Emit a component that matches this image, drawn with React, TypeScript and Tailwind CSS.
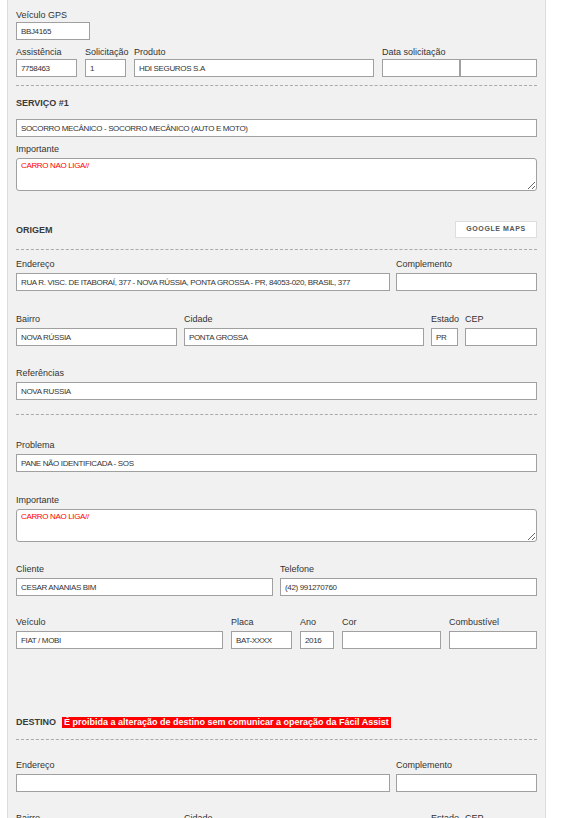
import type { ReactNode } from 'react'

const inputCls =
  'block h-[18px] w-full border border-[#a0a0a0] bg-white px-[4px] text-[8px] tracking-[-0.35px] text-[#333] outline-none'

function Label({ children, low }: { children: ReactNode; low?: boolean }) {
  return (
    <div
      className={`h-[14px] whitespace-nowrap text-[9px] text-[#333] ${low ? 'leading-[14px]' : 'leading-[11px]'}`}
    >
      {children}
    </div>
  )
}

function Field({ label, value = '', w, low }: { label: string; value?: string; w: string; low?: boolean }) {
  return (
    <div className={w}>
      <Label low={low}>{label}</Label>
      <input readOnly className={inputCls} defaultValue={value} />
    </div>
  )
}

function Notes({ label, value, mt }: { label: string; value: string; mt: string }) {
  return (
    <div className={mt}>
      <Label>{label}</Label>
      <textarea
        readOnly
        defaultValue={value}
        className="block h-[33px] w-full rounded-[3px] border border-[#a0a0a0] bg-white px-[4px] pt-[2px] text-[8px] leading-[10px] tracking-[-0.35px] text-[#f00] outline-none"
      />
    </div>
  )
}

function Dashed({ mt }: { mt: string }) {
  return <div className={`${mt} border-t border-dashed border-[#aaa]`} />
}

function Heading({ children }: { children: ReactNode }) {
  return <div className="text-[9px] font-bold leading-[14px] text-[#3a3a3a]">{children}</div>
}

export default function App() {
  return (
    <div className="h-[818px] overflow-hidden bg-white pl-[7px] font-['Liberation_Sans',Arial,sans-serif]">
      <div className="min-h-[900px] w-[539px] border-x border-[#dcdcdc] bg-[#f1f1f1] px-[8px] pt-[8px]">
        {/* Veículo / assistência */}
        <Field label="Veículo GPS" value="BBJ4165" w="w-[74px]" low />

        <div className="mt-[5px] flex gap-[8px]">
          <Field label="Assistência" value="7758463" w="w-[61px]" low />
          <Field label="Solicitação" value="1" w="w-[41px]" low />
          <Field label="Produto" value="HDI SEGUROS S.A" w="w-[240px]" low />
          <div className="flex-1">
            <Label low>Data solicitação</Label>
            <div className="flex">
              <input readOnly className={inputCls} />
              <input readOnly className={inputCls} />
            </div>
          </div>
        </div>

        <Dashed mt="mt-[8px]" />

        {/* Serviço */}
        <div className="mt-[10px]">
          <Heading>SERVIÇO #1</Heading>
        </div>
        <input
          readOnly
          className={`mt-[9px] ${inputCls}`}
          defaultValue="SOCORRO MECÂNICO - SOCORRO MECÂNICO (AUTO E MOTO)"
        />
        <Notes label="Importante" value="CARRO NAO LIGA//" mt="mt-[7px]" />

        {/* Origem */}
        <div className="mt-[30px] flex h-[17px] items-center justify-between">
          <Heading>ORIGEM</Heading>
          <button className="h-[17px] w-[82px] border border-[#dedede] bg-white text-[7px] font-bold tracking-[0.6px] text-[#555]">
            GOOGLE MAPS
          </button>
        </div>

        <Dashed mt="mt-[11px]" />

        <div className="mt-[9px] flex gap-[6px]">
          <Field
            label="Endereço"
            value="RUA R. VISC. DE ITABORAÍ, 377 - NOVA RÚSSIA, PONTA GROSSA - PR, 84053-020, BRASIL, 377"
            w="w-[374px]"
          />
          <Field label="Complemento" w="flex-1" />
        </div>

        <div className="mt-[23px] flex gap-[7px]">
          <Field label="Bairro" value="NOVA RÚSSIA" w="w-[161px]" />
          <Field label="Cidade" value="PONTA GROSSA" w="w-[240px]" />
          <Field label="Estado" value="PR" w="w-[27px]" />
          <Field label="CEP" w="flex-1" />
        </div>

        <div className="mt-[22px]">
          <Field label="Referências" value="NOVA RUSSIA" w="w-full" />
        </div>

        <Dashed mt="mt-[14px]" />

        {/* Problema */}
        <div className="mt-[25px]">
          <Field label="Problema" value="PANE NÃO IDENTIFICADA - SOS" w="w-full" />
        </div>
        <Notes label="Importante" value="CARRO NAO LIGA//" mt="mt-[23px]" />

        <div className="mt-[22px] flex gap-[7px]">
          <Field label="Cliente" value="CESAR ANANIAS BIM" w="w-[257px]" />
          <Field label="Telefone" value="(42) 991270760" w="flex-1" />
        </div>

        <div className="mt-[21px] flex gap-[8px]">
          <Field label="Veículo" value="FIAT / MOBI" w="w-[207px]" />
          <Field label="Placa" value="BAT-XXXX" w="w-[61px]" />
          <Field label="Ano" value="2016" w="w-[34px]" />
          <Field label="Cor" w="w-[99px]" />
          <Field label="Combustível" w="flex-1" />
        </div>

        {/* Destino */}
        <div className="mt-[67px] flex h-[12px] items-center">
          <Heading>DESTINO</Heading>
          <span className="ml-[6px] bg-[#f00] px-[2px] text-[9px] font-bold leading-[11px] text-white">
            É proibida a alteração de destino sem comunicar a operação da Fácil Assist
          </span>
        </div>

        <Dashed mt="mt-[11px]" />

        <div className="mt-[20px] flex gap-[6px]">
          <Field label="Endereço" w="w-[374px]" />
          <Field label="Complemento" w="flex-1" />
        </div>

        <div className="mt-[21px] flex gap-[7px]">
          <Field label="Bairro" w="w-[161px]" />
          <Field label="Cidade" w="w-[240px]" />
          <Field label="Estado" w="w-[27px]" />
          <Field label="CEP" w="flex-1" />
        </div>
      </div>
    </div>
  )
}
